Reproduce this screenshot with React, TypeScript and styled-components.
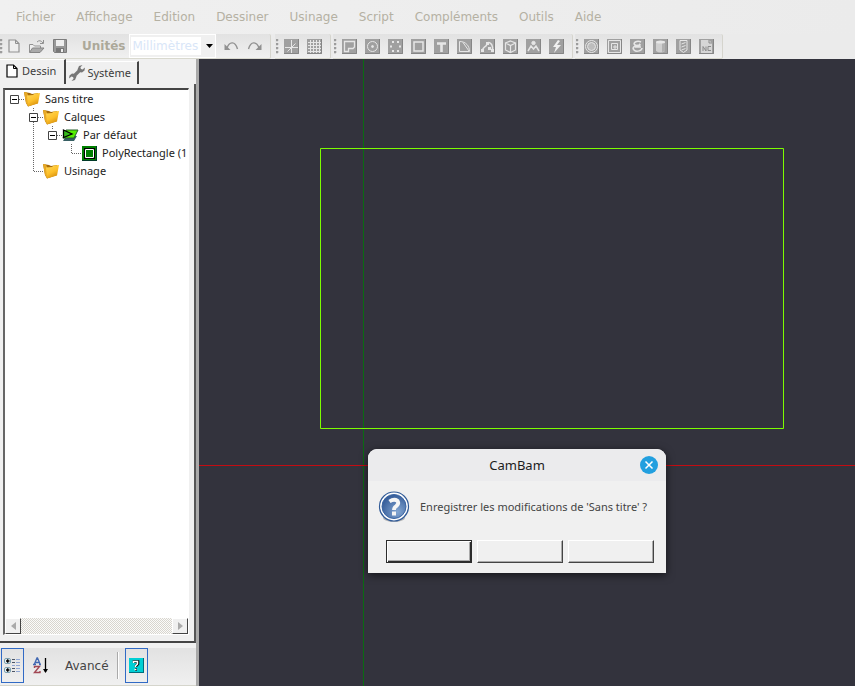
import React from "react";
import styled, { createGlobalStyle, css } from "styled-components";

const GlobalStyle = createGlobalStyle`
  * { box-sizing: border-box; }
  body { margin: 0; background: #f0f0f0; }
  button, select { font: inherit; color: inherit; }
  svg { display: block; flex: none; }
`;

const uiFont = `"Noto Sans", "Open Sans", sans-serif`;
const menuFont = `"DejaVu Sans", sans-serif`;

const Window = styled.div`
  display: flex;
  flex-direction: column;
  height: 100vh;
  font-family: ${uiFont};
  font-size: 11px;
  line-height: 18px;
  color: #222;
`;

const MenuBar = styled.nav`
  display: flex;
  flex: none;
  gap: 21px;
  height: 34px;
  padding-left: 16px;
  background: linear-gradient(90deg, #f0f0f0, #ebebeb);
  font: 12px/34px ${menuFont};
  color: #b5b1a3;
`;

const MenuItem = styled.button`
  padding: 0;
  border: 0;
  background: none;
`;

const ToolBars = styled.div`
  display: flex;
  flex: none;
  height: 25px;
  background: #ebebeb;
`;

const Strip = styled.div`
  display: flex;
  align-items: center;
  flex: none;
  padding: 0 8px 0 1px;
  gap: 5px;
  border-right: 1px solid #d5d4cd;
  border-bottom: 1px solid #d9d9cf;
  border-radius: 0 2px 2px 0;
  background: linear-gradient(#e2e2e2, #f0f0f0);
  & + & { margin-left: 2px; }
`;

const FileStrip = styled(Strip)`
  padding-left: 0;
  margin-right: 2px;
`;

const ToolGroup = styled.div`
  display: flex;
  align-items: center;
  gap: 8px;
`;

const Grip = styled.span`
  width: 3px;
  height: 15px;
  background: radial-gradient(circle at 1px 1px, #9c9c9c 1px, #fff 2px, transparent 2px) 0 0 / 3px 4px;
`;

const IconButton = styled.button`
  display: flex;
  padding: 0;
  border: 0;
  background: none;
`;

const UnitsLabel = styled.label`
  display: flex;
  align-items: center;
  gap: 4px;
  margin-left: 7px;
  font: bold 12px/20px ${menuFont};
  color: #aca899;
`;

const UnitsBox = styled.div`
  display: flex;
  align-items: center;
  height: 24px;
  padding-left: 1px;
  border: 1px solid #fff;
  background: #f0f0f0;
`;

const UnitsSelect = styled.select`
  appearance: none;
  width: 70px;
  height: 18px;
  padding: 0 1px;
  border: 0;
  border-radius: 0;
  background: #fff;
  font: 12px/18px ${menuFont};
  color: #d9e6f8;
`;

const ArrowBox = styled.span`
  display: flex;
  justify-content: flex-end;
  width: 14px;
  padding-right: 2px;
`;

const Main = styled.main`
  display: grid;
  grid-template-columns: 196px 3px minmax(0, 1fr);
  flex: 1;
  min-height: 0;
`;

const Splitter = styled.div`
  background: #a9a9a9;
`;

const SidePanel = styled.aside`
  display: flex;
  flex-direction: column;
  min-height: 0;
  background: #f0f0f0;
`;

const Tabs = styled.div`
  display: flex;
  align-items: flex-end;
  flex: none;
  height: 25px;
  color: #3c3c3c;
`;

const Tab = styled.button<{ $active?: boolean }>`
  display: flex;
  align-items: center;
  gap: 2px;
  height: 23px;
  padding: 0 6px 0 3px;
  border: 0;
  border-top: 1px solid #fff;
  border-right: 2px solid #444;
  background: #f0f0f0;
  ${(p) => p.$active && css`
    gap: 4px;
    height: 25px;
    padding: 0 8px 2px 6px;
  `}
`;

const TabPage = styled.div`
  display: flex;
  flex: 1;
  min-height: 0;
  padding: 4px 5px 6px 3px;
  border-right: 2px solid #555;
  border-bottom: 2px solid #444;
`;

const TreeBox = styled.div`
  display: flex;
  flex-direction: column;
  flex: 1;
  min-width: 0;
  border: 1px solid #999;
  border-top: 2px solid #444;
  border-left: 2px solid #666;
  border-right-color: #fff;
  border-bottom-color: #fff;
  background: #fff;
`;

const Tree = styled.ul`
  flex: 1;
  min-height: 0;
  margin: 0;
  padding: 0;
  overflow: hidden;
  list-style: none;
`;

const TreeRow = styled.li`
  display: flex;
  align-items: center;
  height: 18px;
  white-space: nowrap;
`;

const TreeText = styled.span`
  margin-left: 5px;
`;

const ScrollBar = styled.div`
  display: flex;
  justify-content: space-between;
  flex: none;
  height: 16px;
  background: repeating-conic-gradient(#d8d5ce 0 25%, #fbfbfa 0 50%) 0 0 / 2px 2px;
`;

const ScrollButton = styled.button`
  display: flex;
  align-items: center;
  justify-content: center;
  width: 16px;
  height: 16px;
  padding: 0;
  border: 1px solid #fff;
  border-right-color: #444;
  border-bottom-color: #444;
  background: #f0f0f0;
`;

const PropertyBar = styled.div`
  display: flex;
  align-items: center;
  flex: none;
  height: 38px;
  margin-top: 5px;
  padding: 0 0 2px 1px;
  border-bottom: 1px solid #d5d5cc;
  background: linear-gradient(#e2e2e2, #f0f0f0);
`;

const PropertyButton = styled.button<{ $checked?: boolean }>`
  display: flex;
  align-items: center;
  justify-content: center;
  width: 23px;
  height: 35px;
  padding: 0;
  border: 1px solid ${(p) => (p.$checked ? "#316ac5" : "transparent")};
  background: none;
`;

const SortButton = styled(PropertyButton)`
  margin-left: 6px;
`;

const AdvancedButton = styled.button`
  margin-left: 5px;
  padding: 0 7px;
  border: 0;
  background: none;
  font: 12px/20px ${menuFont};
  color: #444;
`;

const Divider = styled.span`
  width: 2px;
  height: 27px;
  margin: 0 6px 0 1px;
  background: linear-gradient(90deg, #aaa 50%, #fff 50%);
`;

const Canvas = styled.section`
  position: relative;
  min-width: 0;
  overflow: hidden;
  background: #33333d;
`;

const Drawing = styled.svg`
  width: 100%;
  height: 100%;
`;

const Dialog = styled.div`
  position: absolute;
  left: 169px;
  top: 390px;
  width: 298px;
  border-radius: 9px 9px 0 0;
  background: #f0f0f0;
  box-shadow: 0 2px 9px rgba(0, 0, 0, 0.6);
  overflow: hidden;
`;

const DialogHeader = styled.header`
  display: grid;
  grid-template-columns: 26px 1fr 26px;
  align-items: center;
  height: 32px;
  background: #ebebed;
`;

const DialogTitle = styled.h1`
  margin: 0;
  text-align: center;
  font: 400 13px/20px ${uiFont};
  color: #1c1c1c;
`;

const DialogMessage = styled.div`
  display: flex;
  align-items: center;
  gap: 10px;
  padding: 10px 10px 0;
  color: #444;
  white-space: nowrap;
`;

const DialogActions = styled.div`
  display: flex;
  justify-content: center;
  gap: 5px;
  padding: 17px 0 10px 6px;
`;

const DialogButton = styled.button<{ $primary?: boolean }>`
  width: 86px;
  height: 23px;
  padding: 0;
  border: 1px solid #fff;
  border-right-color: #444;
  border-bottom-color: #444;
  background: #f0f0f0;
  box-shadow: inset -1px -1px #aaa;
  ${(p) => p.$primary && css`
    border-color: #2d2d2d;
    box-shadow: inset 1px 1px #fff, inset -1px -1px #2d2d2d, inset -2px -2px #aaa;
  `}
`;

const toolShapes: Record<string, React.ReactNode> = {
  axes: <path d="M1 8.500H14M7.500 1V14M3.500 12.500L11.500 4.500" />,
  grid: <path d="M1 3.500H14M1 6.500H14M1 9.500H14M1 12.500H14M3.500 1V14M6.500 1V14M9.500 1V14M12.500 1V14" />,
  polyline: <path d="M2.500 2.500H12.500V8L11 9.500H6.500V12.500H2.500Z" strokeWidth="1.300" />,
  circle: <><circle cx="7.500" cy="7.500" r="5" /><circle cx="7.500" cy="7.500" r="1" fill="#e6e6e6" /></>,
  points: <path d="M4 3h2M9 3h2M2 7.500h2M11 7.500h2M4 12h2M9 12h2" strokeWidth="2" />,
  rectangle: <path d="M3 3H12V12H3Z" strokeWidth="1.500" />,
  text: <path d="M3 4.500H12M7.500 4.500V13" strokeWidth="2.600" />,
  arc: <path d="M2.500 2.500V12.500H12.500C12.500 7 9 2.500 2.500 2.500ZM6 3.500L12 12" />,
  spline: <><path d="M2.500 12C2.500 7 6 9 7 5C8 2 12 4 12.500 8V11" strokeWidth="1.500" /><path d="M1 10h3v3H1zM6 3h3v3H6zM8 8h3v3H8zM11 10h3v3h-3z" fill="#e6e6e6" stroke="none" /></>,
  solid: <path d="M7.500 2L12.500 4V11L7.500 13.500L2.500 11V4ZM2.500 4L7.500 6.500L12.500 4M7.500 6.500V13" strokeWidth="1.200" />,
  surface: <><path d="M2 12L5 7L7.500 10L10 7L13 12" strokeWidth="1.500" /><circle cx="7.500" cy="4" r="1.700" fill="#e6e6e6" /></>,
  script: <path d="M9 1L4 8H7L5 14L12 6H8L11 2Z" fill="#f0f0f0" stroke="none" />,
  profile: <><circle cx="7.500" cy="7.500" r="6" /><circle cx="7.500" cy="7.500" r="4" fill="#bdbdbd" /></>,
  pocket: <><path d="M1.500 1.500H13.500V13.500H1.500ZM4.500 4.500H10.500V10.500H4.500Z" /><path d="M7 7H9V9H7Z" /></>,
  engrave: <path d="M11 3C7 1 2 4 5 6C8 8 12 6 9 5M10 6C4 6 2 9 4 11C7 14 12 11 12 9M5 8H11" strokeWidth="1.600" />,
  lathe: <><path d="M3 3V12Q7.500 15 12 12V3Z" fill="#cfcfcf" stroke="none" /><path d="M9 4H12V12L9 13Z" fill="#b0b0b0" stroke="none" /><ellipse cx="7.500" cy="3" rx="4.500" ry="1.500" fill="#e6e6e6" stroke="none" /></>,
  drill: <><path d="M4 1.500H11V11L7.500 13.500L4 11Z" /><path d="M5.500 5L9.500 3.500M5.500 8L9.500 6.500M5.500 11L9.500 9.500" /></>,
};

function ToolIcon({ name }: { name: string }) {
  return (
    <svg width="15" height="15" viewBox="0 0 15 15">
      <path d="M0 0H15V15H0Z" fill="#a0a0a0" />
      <path d="M0 14.500H14.500V0" fill="none" stroke="#868686" />
      {name === "nc" ? (
        <>
          <path d="M2 1H10L13 4V14H2Z" fill="#d6d6d6" />
          <path d="M10 1V4H13" fill="none" stroke="#8d8d8d" />
          <path d="M4 12V7.500L7 12V7.500M12 7.500H9V11.500H12" fill="none" stroke="#8b8b8b" />
        </>
      ) : (
        <g fill="none" stroke="#e6e6e6">{toolShapes[name]}</g>
      )}
    </svg>
  );
}

function Tools({ names }: { names: string[] }) {
  return (
    <Strip>
      <Grip />
      <ToolGroup>
        {names.map((name) => (
          <IconButton key={name} aria-label={name}><ToolIcon name={name} /></IconButton>
        ))}
      </ToolGroup>
    </Strip>
  );
}

const PageIcon = ({ color = "#000", fill = "#fff" }: { color?: string; fill?: string }) => (
  <svg width="12" height="14" viewBox="0 0 12 14">
    <path d="M1 1H7.500L11 4.500V13H1Z" fill={fill} stroke={color} strokeWidth="1.200" />
    <path d="M7.500 1V4.500H11" fill="none" stroke={color} />
  </svg>
);

const OpenIcon = () => (
  <svg width="17" height="15" viewBox="0 0 17 15">
    <path d="M1.500 13V5.500H5L6.500 7H12.500V9" fill="#eee" stroke="#919191" />
    <path d="M1.500 13.500L4.500 9H16L12 13.500Z" fill="#aaa" stroke="#858585" />
    <path d="M9 3Q12 0 15 4M15.500 1V4.500H12" fill="none" stroke="#919191" />
  </svg>
);

const SaveIcon = () => (
  <svg width="14" height="14" viewBox="0 0 14 14">
    <path d="M.5 .5H13.500V13.500H1.500L.5 12.500Z" fill="#999" stroke="#7c7c7c" />
    <path d="M3 1H11V7H3Z" fill="#eee" />
    <path d="M3 9H11V13H3Z" fill="#777" />
    <path d="M8 10H10V13H8Z" fill="#eee" />
  </svg>
);

const UndoIcon = ({ redo = false }: { redo?: boolean }) => (
  <svg width="15" height="10" viewBox="0 0 15 10">
    <g transform={redo ? "translate(15 0) scale(-1 1)" : undefined}>
      <path d="M3 7C5 1 11 -1 13.500 8" fill="none" stroke="#919191" strokeWidth="1.400" />
      <path d="M.5 3V9H6.500Z" fill="#919191" />
    </g>
  </svg>
);

const WrenchIcon = () => (
  <svg width="16" height="16" viewBox="0 0 16 16">
    <path d="M4 12L12 4" stroke="#777" strokeWidth="3.200" />
    <path d="M13.500 0L10 1L8.500 4.500L10 7L13 7.500L15.500 5.500L16 2.500L13.500 4.500L11.500 4L11.500 2.200Z" fill="#777" />
    <path d="M2.500 16L6 15L7.500 11.500L6 9L3 8.500L.5 10.500L0 13.500L2.500 11.500L4.500 12L4.500 13.800Z" fill="#777" />
  </svg>
);

const FolderIcon = () => (
  <svg width="16" height="17" viewBox="0 0 16 17">
    <defs>
      <linearGradient id="folder-face" x1="0" y1="0" x2=".5" y2="1">
        <stop offset="0" stopColor="#ffd95a" />
        <stop offset=".6" stopColor="#fdc02a" />
        <stop offset="1" stopColor="#d9920f" />
      </linearGradient>
    </defs>
    <path d="M0 1L6 2L8 3L14 2V12L4 15.500L2 12Z" fill="#a86c0a" />
    <path d="M0 1L3 1.500L4.500 5L4 15L2 12Z" fill="#e8a924" />
    <path d="M3 4.500L9 4L10.500 2.500L16 2L14 12.500L4 15.500Z" fill="url(#folder-face)" />
  </svg>
);

const LayerIcon = () => (
  <svg width="17" height="16" viewBox="0 0 17 16">
    <path d="M4 9H15L12 14H1Z" fill="#365f63" />
    <path d="M4 3H16L12 11H1Z" fill="#54f000" stroke="#265e2d" />
    <path d="M1.500 3L10 7L1.500 10.500Z" fill="#35b91a" stroke="#000" strokeWidth="1.300" />
  </svg>
);

const RectIcon = () => (
  <svg width="15" height="15" viewBox="0 0 15 15">
    <path d="M0 0H15V15H0Z" fill="#003a28" />
    <path d="M0 0H14V14H0Z" fill="#008000" />
    <path d="M3 3H12V12H3Z" fill="#008000" stroke="#000" strokeWidth="2" />
    <path d="M3.500 3.500H11.500V11.500H3.500Z" fill="none" stroke="#fff" />
  </svg>
);

/* One column of the tree: dotted connectors named by the sides they reach. */
const Guide = styled.svg.attrs({ width: 19, height: 18, viewBox: "0 0 19 18" })`
  fill: none;
  stroke: #666;
  stroke-dasharray: 1 1;
`;

const guidePaths = {
  none: "",
  through: "M9.500 0V18",
  corner: "M9.500 0V9.500H19",
  open: "M14 9.500H19",
  openLast: "M9.500 0V4M14 9.500H19",
  openMore: "M9.500 0V4M9.500 14V18M14 9.500H19",
};

type GuideKind = keyof typeof guidePaths;

const treeRows: { label: string; icon: React.ReactNode; guides: GuideKind[] }[] = [
  { label: "Sans titre", icon: <FolderIcon />, guides: ["open"] },
  { label: "Calques", icon: <FolderIcon />, guides: ["none", "openMore"] },
  { label: "Par défaut", icon: <LayerIcon />, guides: ["none", "through", "openLast"] },
  { label: "PolyRectangle (1", icon: <RectIcon />, guides: ["none", "through", "none", "corner"] },
  { label: "Usinage", icon: <FolderIcon />, guides: ["none", "corner"] },
];

const IconSlot = styled.span`
  display: flex;
  justify-content: center;
  flex: none;
  width: 16px;
`;

function GuideCell({ kind }: { kind: GuideKind }) {
  const lines = (
    <Guide>
      <path d={guidePaths[kind]} />
      {kind.startsWith("open") && (
        <g strokeDasharray="none">
          <path d="M5.500 5.500H13.500V13.500H5.500Z" fill="#fff" stroke="#444" />
          <path d="M7 9.500H12" stroke="#000" />
        </g>
      )}
    </Guide>
  );
  return kind.startsWith("open") ? <IconButton aria-label="Replier">{lines}</IconButton> : lines;
}

const CategoriesIcon = () => (
  <svg width="17" height="17" viewBox="0 0 17 17">
    <path d="M8 2.500H11M8 5.500H11M8 11.500H11M8 14.500H11" stroke="#4d5666" />
    <path d="M12 2.500H16M12 5.500H16M8 8.500H11M12 8.500H16M12 11.500H16M12 14.500H16" stroke="#91a7d4" />
    <g fill="#e7f1f4" stroke="#7ca1b2">
      <rect x=".5" y="1.500" width="6" height="5" rx="1.500" />
      <rect x=".5" y="10.500" width="6" height="5" rx="1.500" />
    </g>
    <path d="M2 4H5.500M3.700 2.300V5.700M2 13H5.500M3.700 11.300V14.700" stroke="#000" strokeWidth="1.500" />
  </svg>
);

const SortIcon = () => (
  <svg width="17" height="17" viewBox="0 0 17 17">
    <path d="M1 8L4 1H4.500L7.500 8M2.500 5.500H6M0 7.500H3M6 7.500H8" fill="none" stroke="#4168b2" strokeWidth="1.300" />
    <path d="M1.500 11V9.500H6.500L1.500 15.500H7V14" fill="none" stroke="#a24854" strokeWidth="1.400" />
    <path d="M12.500 1V15" stroke="#000" strokeWidth="1.300" />
    <path d="M10 12H15L12.500 16Z" />
  </svg>
);

const HelpIcon = () => (
  <svg width="15" height="15" viewBox="0 0 15 15">
    <path d="M0 0H15V15H0Z" fill="#006e7d" />
    <path d="M0 0H14V14H0Z" fill="#00cfd4" />
    <path d="M5 5V3.500H9V6L7 8V9M6 11.500H8" fill="none" stroke="#000" strokeWidth="2.600" />
    <path d="M4.500 5V3.500H8.500V6L6.500 8V9M5.500 11.500H7.500" fill="none" stroke="#fff" strokeWidth="1.500" />
  </svg>
);

const QuestionIcon = () => (
  <svg width="32" height="32" viewBox="0 0 32 32">
    <defs>
      <radialGradient id="question-fill" cx=".65" cy=".72" r=".7">
        <stop offset="0" stopColor="#83a6d2" />
        <stop offset="1" stopColor="#385f9b" />
      </radialGradient>
    </defs>
    <ellipse cx="16" cy="27" rx="11" ry="4" fill="#b8b8b8" />
    <circle cx="16" cy="15.500" r="14.500" fill="#fff" stroke="#315b98" strokeWidth="1.200" />
    <circle cx="16" cy="15.500" r="12" fill="url(#question-fill)" stroke="#3a65a3" />
    <path d="M11.500 10.500Q16 7.500 19.500 9.800Q21.500 13 18 15.300Q16 16.500 16 19" fill="none" stroke="#f5f5f5" strokeWidth="3.800" />
    <path d="M14 20.500H18V24.500H14Z" fill="#f5f5f5" />
  </svg>
);

const CloseIcon = () => (
  <svg width="18" height="18" viewBox="0 0 18 18">
    <circle cx="9" cy="9" r="9" fill="#229fdf" />
    <path d="M5.500 5.500L12.500 12.500M12.500 5.500L5.500 12.500" stroke="#fff" strokeWidth="1.500" />
  </svg>
);

const menus = ["Fichier", "Affichage", "Edition", "Dessiner", "Usinage", "Script", "Compléments", "Outils", "Aide"];
const viewTools = ["axes", "grid"];
const drawTools = ["polyline", "circle", "points", "rectangle", "text", "arc", "spline", "solid", "surface", "script"];
const machineTools = ["profile", "pocket", "engrave", "lathe", "drill", "nc"];

export default function App() {
  return (
    <>
      <GlobalStyle />
      <Window>
        <MenuBar>{menus.map((m) => <MenuItem key={m}>{m}</MenuItem>)}</MenuBar>
        <ToolBars>
          <FileStrip>
            <Grip />
            <ToolGroup>
              <IconButton aria-label="Nouveau"><PageIcon color="#919191" fill="#eee" /></IconButton>
              <IconButton aria-label="Ouvrir"><OpenIcon /></IconButton>
              <IconButton aria-label="Enregistrer"><SaveIcon /></IconButton>
              <UnitsLabel>
                Unités
                <UnitsBox>
                  <UnitsSelect defaultValue="mm"><option value="mm">Millimètres</option></UnitsSelect>
                  <ArrowBox><svg width="7" height="4" viewBox="0 0 7 4"><path d="M0 0H7L3.500 4Z" /></svg></ArrowBox>
                </UnitsBox>
              </UnitsLabel>
              <IconButton aria-label="Annuler"><UndoIcon /></IconButton>
              <IconButton aria-label="Rétablir"><UndoIcon redo /></IconButton>
            </ToolGroup>
          </FileStrip>
          <Tools names={viewTools} />
          <Tools names={drawTools} />
          <Tools names={machineTools} />
        </ToolBars>
        <Main>
          <SidePanel>
            <Tabs role="tablist">
              <Tab $active role="tab" aria-selected="true"><PageIcon />Dessin</Tab>
              <Tab role="tab" aria-selected="false"><WrenchIcon />Système</Tab>
            </Tabs>
            <TabPage>
              <TreeBox>
                <Tree>
                  {treeRows.map((row) => (
                    <TreeRow key={row.label}>
                      {row.guides.map((kind, i) => <GuideCell key={i} kind={kind} />)}
                      <IconSlot>{row.icon}</IconSlot>
                      <TreeText>{row.label}</TreeText>
                    </TreeRow>
                  ))}
                </Tree>
                <ScrollBar>
                  <ScrollButton aria-label="Gauche"><svg width="5" height="8" viewBox="0 0 5 8"><path d="M5 0V8L0 4Z" fill="#aaa" /></svg></ScrollButton>
                  <ScrollButton aria-label="Droite"><svg width="5" height="8" viewBox="0 0 5 8"><path d="M0 0V8L5 4Z" fill="#aaa" /></svg></ScrollButton>
                </ScrollBar>
              </TreeBox>
            </TabPage>
            <PropertyBar>
              <PropertyButton $checked aria-label="Par catégorie"><CategoriesIcon /></PropertyButton>
              <SortButton aria-label="Alphabétique"><SortIcon /></SortButton>
              <AdvancedButton>Avancé</AdvancedButton>
              <Divider />
              <PropertyButton $checked aria-label="Aide"><HelpIcon /></PropertyButton>
            </PropertyBar>
          </SidePanel>
          <Splitter />
          <Canvas>
            <Drawing>
              <path d="M164.500 0V2000" stroke="#0b6b12" />
              <path d="M0 406.500H4000" stroke="#c40c12" />
              <path d="M121.500 89.500H584.500V369.500H121.500Z" fill="none" stroke="#7cfc00" />
            </Drawing>
            <Dialog role="dialog" aria-labelledby="dialog-title">
              <DialogHeader>
                <span />
                <DialogTitle id="dialog-title">CamBam</DialogTitle>
                <IconButton aria-label="Fermer"><CloseIcon /></IconButton>
              </DialogHeader>
              <DialogMessage><QuestionIcon />Enregistrer les modifications de 'Sans titre' ?</DialogMessage>
              <DialogActions>
                <DialogButton $primary aria-label="Oui" />
                <DialogButton aria-label="Non" />
                <DialogButton aria-label="Annuler" />
              </DialogActions>
            </Dialog>
          </Canvas>
        </Main>
      </Window>
    </>
  );
}
